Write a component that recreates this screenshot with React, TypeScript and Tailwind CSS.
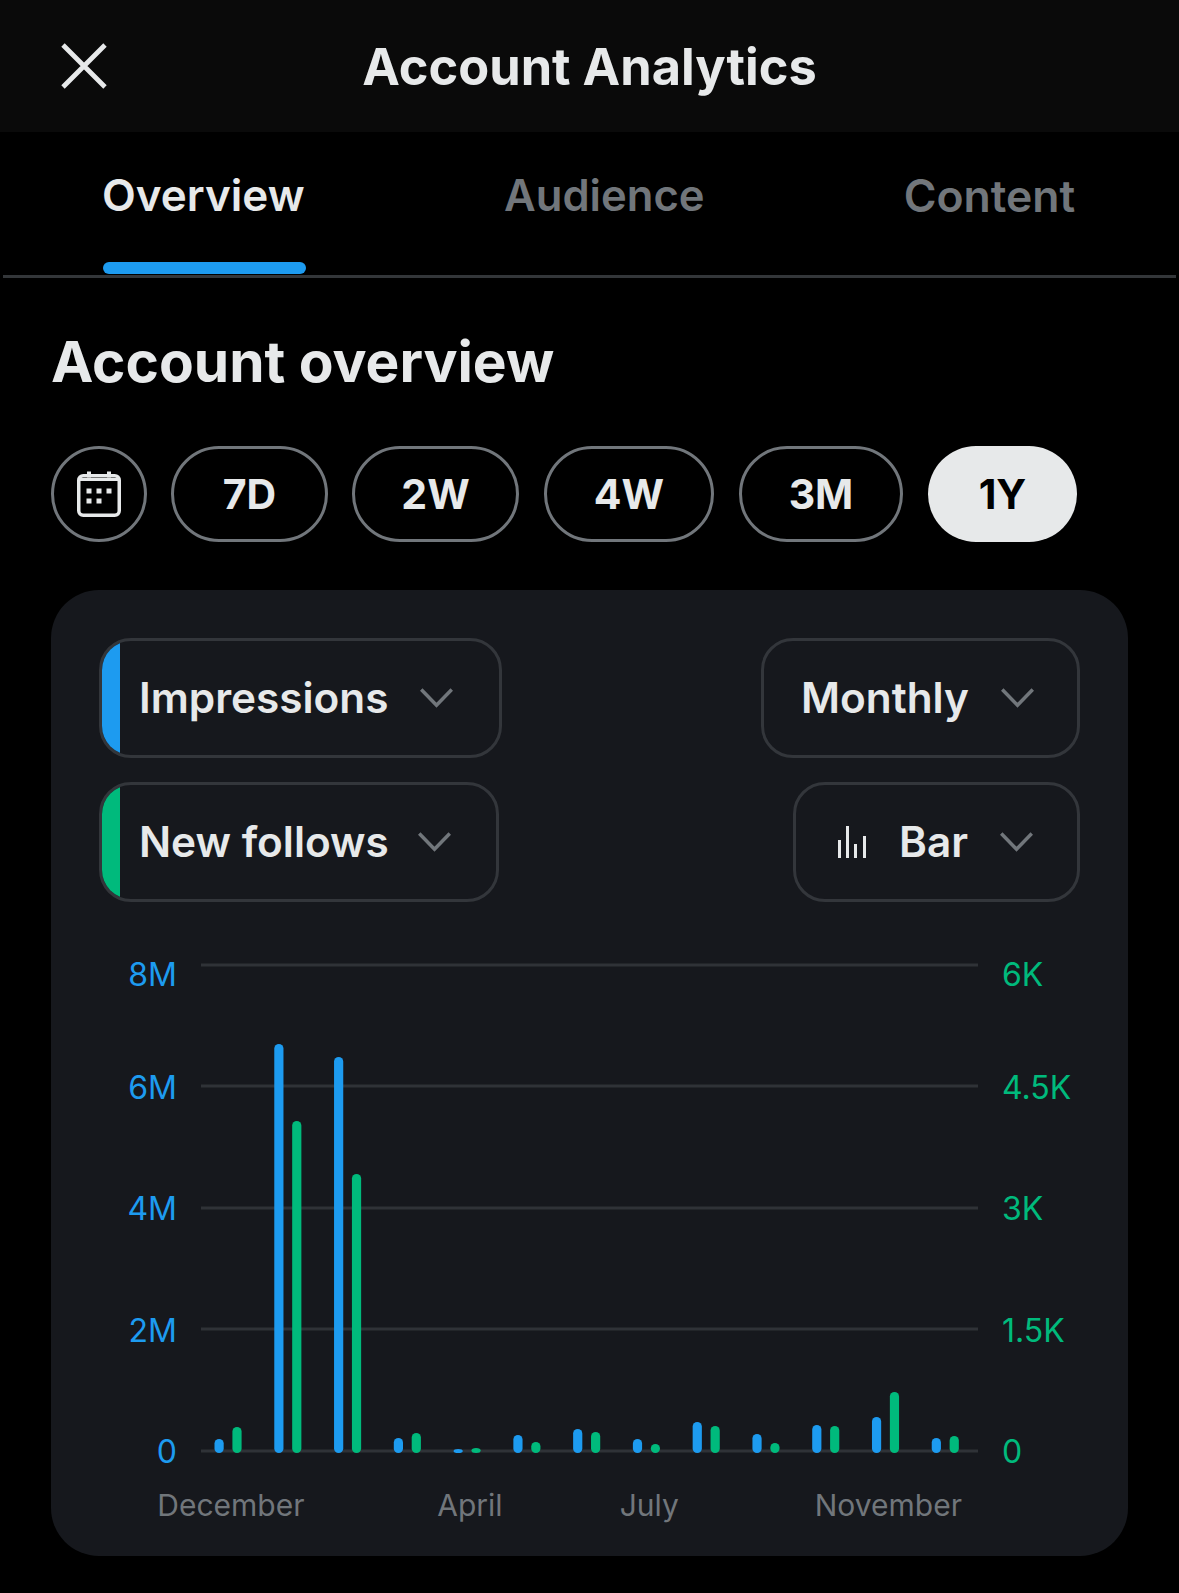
const blue = [1439,1044,1057,1438,1449,1435,1429,1439,1422,1434,1425,1417,1438];
const green = [1427,1121,1174,1433,1448,1442,1432,1444,1426,1443,1426,1392,1436];
const BASE = 1452;
const xLabels: Record<number, string> = { 0: "December", 4: "April", 7: "July", 11: "November" };

function Chevron() {
  return (
    <svg width="33" height="20" viewBox="0 0 33 20" fill="none" className="shrink-0">
      <path d="M1.2 1.5L16.5 17.2L31.8 1.5" stroke="#71767b" strokeWidth="3.6" />
    </svg>
  );
}

function Dropdown({ label, strip, icon, chevronGap, className }: { label: string; strip?: string; icon?: boolean; chevronGap: string; className: string }) {
  return (
    <div className={`flex h-[120px] items-center overflow-hidden rounded-[32px] border-[3px] border-[#33363b] ${className}`}>
      {strip === "blue" && <div className="h-full w-[18px] shrink-0 bg-[#1d9bf0]" />}
      {strip === "green" && <div className="h-full w-[18px] shrink-0 bg-[#00ba7c]" />}
      {icon && (
        <svg width="28" height="32" viewBox="0 0 28 32" className="ml-[42px] mr-[33px] shrink-0" fill="#e7e9ea">
          <rect x="0" y="14" width="3" height="18" />
          <rect x="8" y="0" width="3" height="32" />
          <rect x="16" y="18" width="3" height="14" />
          <rect x="25" y="10" width="3" height="22" />
        </svg>
      )}
      <span className={`whitespace-nowrap pt-[1px] text-[42.3px] font-semibold leading-none text-[#e7e9ea] ${strip ? "ml-[19px]" : icon ? "" : "ml-[37px]"}`}>{label}</span>
      <span className={chevronGap}><Chevron /></span>
    </div>
  );
}

function Pill({ label, width, active }: { label: string; width: string; active?: boolean }) {
  return (
    <div className={`flex h-[96px] items-center justify-center rounded-full pt-[2px] text-[41px] font-bold ${width} ${active ? "bg-[#e7e9ea] text-black" : "border-[3px] border-[#71767b] text-[#e7e9ea]"}`}>
      {label}
    </div>
  );
}

export default function App() {
  return (
    <div className="h-[1593px] w-[1179px] overflow-hidden bg-black font-['Inter',sans-serif] text-[#e7e9ea]">
      <header className="grid h-[132px] grid-cols-[1fr_auto_1fr] items-center bg-[#0a0a0a]">
        <svg width="46" height="46" viewBox="0 0 46 46" fill="none" className="ml-[61px]">
          <path d="M2 2L44 44M44 2L2 44" stroke="#e7e9ea" strokeWidth="4.8" />
        </svg>
        <h1 className="mt-[2px] text-[50.5px] font-bold leading-none">Account Analytics</h1>
        <div />
      </header>

      <nav className="mx-[3px] flex h-[146px] border-b-[3px] border-[#333639] pl-[100px]">
        <div className="mb-[1px] flex w-[203px] flex-col justify-end">
          <span className="mb-[45px] -ml-[1px] whitespace-nowrap text-[44px] font-semibold leading-none">Overview</span>
          <div className="h-[12px] rounded-full bg-[#1d9bf0]" />
        </div>
        <span className="ml-[198px] mt-[42px] text-[43.6px] font-semibold leading-none text-[#71767b]">Audience</span>
        <span className="ml-[199px] mt-[42px] text-[44.5px] font-semibold leading-none text-[#71767b]">Content</span>
      </nav>

      <section className="px-[51px]">
        <h2 className="mt-[49px] text-[56.8px] font-bold leading-[70px]">Account overview</h2>

        <div className="mt-[49px] flex gap-[25px]">
          <div className="-mr-[1px] flex h-[96px] w-[96px] items-center justify-center rounded-full border-[3px] border-[#71767b]">
            <svg width="46" height="46" viewBox="0 0 46 46" fill="none">
              <rect x="2.75" y="4.75" width="40.5" height="39.5" rx="4.5" stroke="#e7e9ea" strokeWidth="3.5" />
              <path d="M3 7H43V10H3Z" fill="#e7e9ea" />
              <g fill="#e7e9ea">
                <rect x="11" y="0.5" width="4" height="6" />
                <rect x="31" y="0.5" width="4" height="6" />
                <rect x="10.5" y="17.5" width="5" height="5" />
                <rect x="20.5" y="17.5" width="5" height="5" />
                <rect x="30.5" y="17.5" width="5" height="5" />
                <rect x="10.5" y="27.5" width="5" height="5" />
                <rect x="20.5" y="27.5" width="5" height="5" />
              </g>
            </svg>
          </div>
          <Pill label="7D" width="w-[157px]" />
          <div className="-ml-[1px]"><Pill label="2W" width="w-[167px]" /></div>
          <Pill label="4W" width="w-[170px]" />
          <Pill label="3M" width="w-[164px]" />
          <Pill label="1Y" width="w-[149px]" active />
        </div>

        <div className="mt-[48px] h-[966px] rounded-[48px] bg-[#16181d] px-[48px] pt-[48px]">
          <div className="flex justify-between">
            <Dropdown label="Impressions" strip="blue" chevronGap="ml-[32px]" className="w-[403px]" />
            <Dropdown label="Monthly" chevronGap="ml-[32px]" className="w-[319px]" />
          </div>
          <div className="mt-[24px] flex justify-between">
            <Dropdown label="New follows" strip="green" chevronGap="ml-[29px]" className="w-[400px]" />
            <Dropdown label="Bar" icon chevronGap="ml-[32px]" className="w-[287px]" />
          </div>

          <div className="mt-[58px] grid grid-cols-[78px_777px_77px] gap-x-[24px]">
            <div className="flex flex-col items-end text-[32px] leading-[40px] text-[#1d9bf0]">
              <span className="mt-[-5px]">8M</span>
              <span className="mt-[73px]">6M</span>
              <span className="mt-[81px]">4M</span>
              <span className="mt-[82px]">2M</span>
              <span className="mt-[81px]">0</span>
            </div>

            <svg width="777" height="496" viewBox="201 960 777 496" className="block">
              {[965, 1086, 1208, 1329, 1451].map((y) => (
                <line key={y} x1="201" x2="978" y1={y} y2={y} stroke="#2f3237" strokeWidth="3" />
              ))}
              {blue.map((t, i) => (
                <rect key={i} x={214.5 + i * 59.77} y={t} width="9.2" height={BASE + 1 - t} rx="4.6" ry={Math.min(4.6, (BASE + 1 - t) / 2)} fill="#1d9bf0" />
              ))}
              {green.map((t, i) => (
                <rect key={i} x={232.4 + i * 59.77} y={t} width="9.2" height={BASE + 1 - t} rx="4.6" ry={Math.min(4.6, (BASE + 1 - t) / 2)} fill="#00ba7c" />
              ))}
            </svg>

            <div className="flex flex-col text-[32px] leading-[40px] text-[#00ba7c]">
              <span className="mt-[-5px]">6K</span>
              <span className="mt-[73px]">4.5K</span>
              <span className="mt-[81px]">3K</span>
              <span className="mt-[82px]">1.5K</span>
              <span className="mt-[81px]">0</span>
            </div>

            <div className="col-start-2 mt-[13px] grid grid-cols-[repeat(13,minmax(0,1fr))] text-[30px] leading-[40px] text-[#71767b]">
              {blue.map((_, i) => (
                <div key={i} className="flex justify-center whitespace-nowrap">{xLabels[i] ?? ""}</div>
              ))}
            </div>
          </div>
        </div>
      </section>
    </div>
  );
}
